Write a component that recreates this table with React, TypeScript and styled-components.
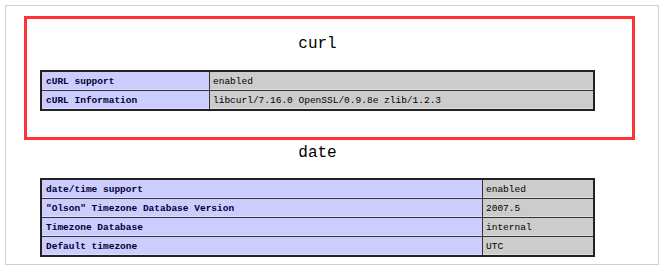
import styled, { createGlobalStyle } from 'styled-components'

const GlobalStyle = createGlobalStyle`
  html, body {
    margin: 0;
    padding: 0;
    background: #ffffff;
  }
`

const Frame = styled.div`
  margin: 5px;
  width: 652px;
  height: 258px;
  border: 1px solid #cfcfcf;
  overflow: hidden;
`

const Highlight = styled.section`
  margin: 10px 23px 0 18px;
  border: 3px solid #ff3333;
  padding: 13px 0 28px 13px;
  box-sizing: border-box;
  height: 124px;
`

const Module = styled.div<{ $inset?: number }>`
  width: 555px;
  margin-left: ${(p) => p.$inset ?? 0}px;
`

const ModuleTitle = styled.h2<{ $gap: number; $top?: number }>`
  margin: ${(p) => p.$top ?? 0}px 0 ${(p) => p.$gap}px;
  height: 24px;
  line-height: 24px;
  text-align: center;
  font-family: "Liberation Mono", "DejaVu Sans Mono", monospace;
  font-size: 16px;
  font-weight: normal;
  color: #000;
`

const InfoTable = styled.table`
  width: 555px;
  border-collapse: collapse;
  border: 2px solid #222;
  font-family: "Liberation Mono", "DejaVu Sans Mono", monospace;
  font-size: 9.5px;
  color: #000;
`

const Cell = styled.td<{ $label?: boolean; $width?: number }>`
  height: 18px;
  padding: 0 3px 0 ${(p) => (p.$label ? 4 : 3)}px;
  border: 1px solid #333;
  vertical-align: middle;
  white-space: nowrap;
  background: ${(p) => (p.$label ? '#ccccff' : '#cccccc')};
  font-weight: ${(p) => (p.$label ? 'bold' : 'normal')};
  color: ${(p) => (p.$label ? '#000033' : '#000')};
  width: ${(p) => (p.$width ? `${p.$width}px` : 'auto')};
  box-shadow: inset 0 -1px 0 rgba(255, 255, 255, 0.35);
`

type Row = [string, string]

const curlRows: Row[] = [
  ['cURL support', 'enabled'],
  ['cURL Information', 'libcurl/7.16.0 OpenSSL/0.9.8e zlib/1.2.3'],
]

const dateRows: Row[] = [
  ['date/time support', 'enabled'],
  ['"Olson" Timezone Database Version', '2007.5'],
  ['Timezone Database', 'internal'],
  ['Default timezone', 'UTC'],
]

const SettingsTable = ({ rows, labelWidth }: { rows: Row[]; labelWidth: number }) => (
  <InfoTable>
    <tbody>
      {rows.map(([key, value]) => (
        <tr key={key}>
          <Cell $label $width={labelWidth}>{key}</Cell>
          <Cell>{value}</Cell>
        </tr>
      ))}
    </tbody>
  </InfoTable>
)

const App = () => (
  <>
    <GlobalStyle />
    <Frame>
      <Highlight>
        <Module>
          <ModuleTitle $gap={14}>curl</ModuleTitle>
          <SettingsTable rows={curlRows} labelWidth={160} />
        </Module>
      </Highlight>
      <Module $inset={34}>
        <ModuleTitle $gap={13} $top={1}>date</ModuleTitle>
        <SettingsTable rows={dateRows} labelWidth={433} />
      </Module>
    </Frame>
  </>
)

export default App
